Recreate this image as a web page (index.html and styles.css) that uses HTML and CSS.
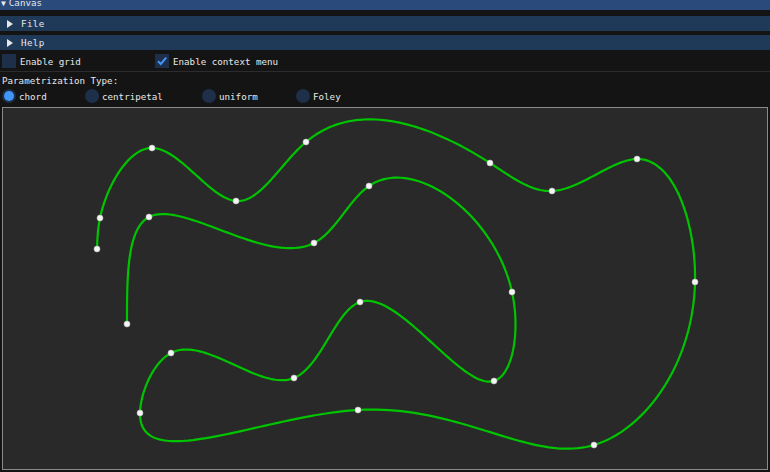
FILE: index.html
```html
<!DOCTYPE html>
<html>
<head>
<meta charset="utf-8">
<link rel="stylesheet" href="styles.css">
</head>
<body>
<div class="window">
  <div class="titlebar"><span class="title-text"><span class="tri-down">▼</span>Canvas</span></div>
  <div class="header header-first"><span class="tri-right"></span><span>File</span></div>
  <div class="header"><span class="tri-right"></span><span>Help</span></div>
  <div class="checks">
    <label class="check check-grid"><span class="box"></span><span>Enable grid</span></label>
    <label class="check"><span class="box checked"><svg width="14" height="14" viewBox="0 0 14 14"><path d="M3 7.2 L5.8 10 L11.2 3.6" fill="none" stroke="#4296fa" stroke-width="2"/></svg></span><span>Enable context menu</span></label>
  </div>
  <div class="separator"></div>
  <div class="label">Parametrization Type:</div>
  <div class="radios">
    <div class="radio r-chord"><span class="dot selected"></span><span>chord</span></div>
    <div class="radio r-centri"><span class="dot"></span><span>centripetal</span></div>
    <div class="radio r-uniform"><span class="dot"></span><span>uniform</span></div>
    <div class="radio"><span class="dot"></span><span>Foley</span></div>
  </div>
  <div class="canvas">
    <svg id="curve" width="766" height="363" viewBox="2 107 766 363">
      <path id="spline" d="" fill="none" stroke="#00c400" stroke-width="2.2" stroke-linejoin="round"/>
      <g id="pts"></g>
    </svg>
  </div>
</div>
<script src="script.js"></script>
</body>
</html>
```
FILE: styles.css
```css
html, body {
  margin: 0;
  padding: 0;
  background: #141414;
}
body {
  width: 770px;
  height: 472px;
  overflow: hidden;
  font-family: "DejaVu Sans Mono", "Liberation Mono", monospace;
  font-size: 9.2px;
  color: #e8e8e8;
}
.window {
  display: flex;
  flex-direction: column;
}
.titlebar {
  height: 10px;
  background: #294a7a;
  overflow: hidden;
}
.title-text {
  display: block;
  margin-top: -4px;
  line-height: 14px;
  padding-left: 1px;
}
.tri-down {
  font-size: 8px;
  margin-right: 3px;
}
.header {
  height: 15px;
  background: #1f3958;
  margin-top: 4px;
  display: flex;
  align-items: center;
  padding-left: 7px;
  letter-spacing: 0.4px;
}
.header-first {
  margin-top: 6px;
}
.tri-right {
  width: 0;
  height: 0;
  border-top: 4px solid transparent;
  border-bottom: 4px solid transparent;
  border-left: 6px solid #e8e8e8;
  margin-right: 8px;
}
.checks {
  display: flex;
  align-items: center;
  padding: 4px 0 0 2px;
  height: 14px;
}
.check {
  display: flex;
  align-items: center;
  gap: 4px;
}
.check-grid {
  width: 153px;
}
.box {
  width: 14px;
  height: 14px;
  background: #1d2f49;
  display: block;
}
.separator {
  height: 1px;
  background: #2c2c30;
  margin-top: 3px;
}
.label {
  padding-left: 2px;
  margin-top: 3px;
  line-height: 11px;
}
.radios {
  display: flex;
  align-items: center;
  padding-left: 2px;
  margin-top: 3px;
  height: 14px;
}
.radio {
  display: flex;
  align-items: center;
  gap: 3px;
}
.r-chord { width: 83px; }
.r-centri { width: 117px; }
.r-uniform { width: 94px; }
.dot {
  width: 14px;
  height: 14px;
  border-radius: 50%;
  background: #1d2f49;
  display: block;
  position: relative;
}
.dot.selected::after {
  content: "";
  position: absolute;
  left: 2px;
  top: 2px;
  width: 10px;
  height: 10px;
  border-radius: 50%;
  background: #4296fa;
}
.canvas {
  margin: 4px 2px 0 2px;
  width: 764px;
  height: 361px;
  border: 1px solid #8a8a8a;
  background: #292929;
  position: relative;
  overflow: hidden;
}
.canvas svg {
  position: absolute;
  left: -1px;
  top: -1px;
}
```
FILE: script.js
```js
(function () {
  var P = [
    [97,249],[100,218],[152,148],[236,201],[306,142],[490,163],[552,191],
    [637,159],[695,282],[594,445],[358,410],[140,413],[171,353],[294,378],
    [360,302],[494,381],[512,292],[369,186],[314,243],[149,217],[127,324]
  ];
  var n = P.length;
  function dist(a, b) { return Math.sqrt((a[0]-b[0])*(a[0]-b[0])+(a[1]-b[1])*(a[1]-b[1])); }
  var h = [];
  for (var i = 0; i < n - 1; i++) h.push(Math.max(dist(P[i], P[i+1]), 1e-3));

  /* natural cubic spline: second derivatives per coordinate */
  function solve(c) {
    var M = new Array(n).fill(0);
    var m = n - 2;
    if (m <= 0) return M;
    var a = [], b = [], cc = [], d = [];
    for (var i = 1; i <= n - 2; i++) {
      a.push(h[i-1]);
      b.push(2 * (h[i-1] + h[i]));
      cc.push(h[i]);
      d.push(6 * ((P[i+1][c] - P[i][c]) / h[i] - (P[i][c] - P[i-1][c]) / h[i-1]));
    }
    for (var k = 1; k < m; k++) {
      var w = a[k] / b[k-1];
      b[k] -= w * cc[k-1];
      d[k] -= w * d[k-1];
    }
    var x = new Array(m);
    x[m-1] = d[m-1] / b[m-1];
    for (var k = m - 2; k >= 0; k--) x[k] = (d[k] - cc[k] * x[k+1]) / b[k];
    for (var k = 0; k < m; k++) M[k+1] = x[k];
    return M;
  }
  var MX = solve(0), MY = solve(1);
  function ev(M, c, i, s) {
    var hi = h[i], A = hi - s, B = s;
    return M[i]*A*A*A/(6*hi) + M[i+1]*B*B*B/(6*hi)
      + (P[i][c]/hi - M[i]*hi/6)*A + (P[i+1][c]/hi - M[i+1]*hi/6)*B;
  }
  var d = "";
  for (var i = 0; i < n - 1; i++) {
    var steps = 48;
    for (var s = 0; s <= steps; s++) {
      var u = h[i] * s / steps;
      var x = ev(MX, 0, i, u), y = ev(MY, 1, i, u);
      d += (d === "" ? "M" : "L") + x.toFixed(2) + " " + y.toFixed(2);
    }
  }
  document.getElementById("spline").setAttribute("d", d);
  var g = document.getElementById("pts");
  var ns = "http://www.w3.org/2000/svg";
  P.forEach(function (p) {
    var c = document.createElementNS(ns, "circle");
    c.setAttribute("cx", p[0]);
    c.setAttribute("cy", p[1]);
    c.setAttribute("r", "3");
    c.setAttribute("fill", "#f4f4f4");
    c.setAttribute("stroke", "#bdbdbd");
    c.setAttribute("stroke-width", "0.6");
    g.appendChild(c);
  });
})();
```
